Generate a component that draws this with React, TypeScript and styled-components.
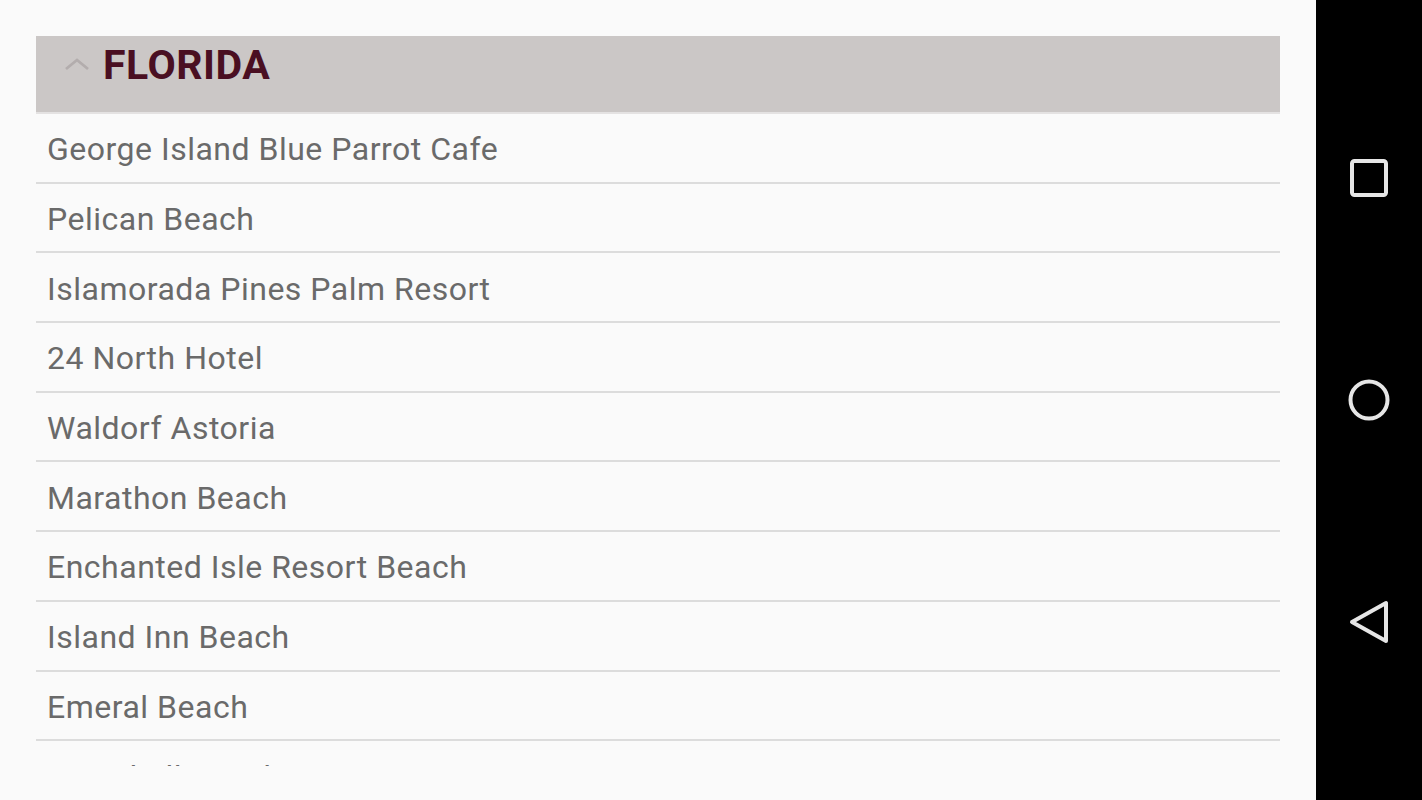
import React from "react";
import styled, { createGlobalStyle } from "styled-components";

const GlobalStyle = createGlobalStyle`
    html, body {
        margin: 0;
        padding: 0;
        background: #fafafa;
        font-family: Roboto, "Noto Sans", sans-serif;
    }
`;

const Screen = styled.div`
    display: flex;
    width: 1422px;
    height: 800px;
    overflow: hidden;
`;

const Content = styled.main`
    flex: 1;
    padding: 36px 36px 0;
    background: #fafafa;
    box-sizing: border-box;
    height: 800px;
`;

const Section = styled.section`
    height: 730px;
    overflow: hidden;
`;

const SectionHeader = styled.header`
    display: flex;
    align-items: center;
    height: 76px;
    padding-left: 28px;
    background: #cbc7c6;
    border-bottom: 2px solid #e4e2e2;
`;

const Chevron = styled.svg`
    width: 26px;
    height: 14px;
    margin-right: 13px;
    margin-top: -20px;
`;

const Title = styled.h2`
    margin: 0;
    font-size: 41px;
    font-weight: 700;
    color: #4a0f22;
    letter-spacing: 0.5px;
    margin-top: -19px;
`;

const List = styled.ul`
    list-style: none;
    margin: 0;
    padding: 0;
`;

const Row = styled.li`
    display: flex;
    align-items: center;
    height: 69.7px;
    padding-left: 11px;
    padding-top: 3px;
    box-sizing: border-box;
    border-bottom: 2px solid #dcdcdc;
    font-size: 32px;
    letter-spacing: 0.5px;
    color: #6a6a6a;
`;

const NavBar = styled.nav`
    width: 106px;
    background: #000;
    display: flex;
    flex-direction: column;
    align-items: center;
    justify-content: space-between;
    padding: 156px 0 156px;
    box-sizing: border-box;
`;

const NavIcon = styled.svg`
    width: 44px;
    height: 44px;
    display: block;
`;

const places = [
    "George Island Blue Parrot Cafe",
    "Pelican Beach",
    "Islamorada Pines Palm Resort",
    "24 North Hotel",
    "Waldorf Astoria",
    "Marathon Beach",
    "Enchanted Isle Resort Beach",
    "Island Inn Beach",
    "Emeral Beach",
    "Sea Shell Beach",
];

const App: React.FC = () => (
    <>
        <GlobalStyle />
        <Screen>
            <Content>
                <Section>
                    <SectionHeader>
                        <Chevron viewBox="0 0 26 14">
                            <polyline points="2,12 13,3 24,12" fill="none" stroke="#b3adad" strokeWidth="2.8" />
                        </Chevron>
                        <Title>FLORIDA</Title>
                    </SectionHeader>
                    <List>
                        {places.map((p) => (
                            <Row key={p}>{p}</Row>
                        ))}
                    </List>
                </Section>
            </Content>
            <NavBar>
                <NavIcon viewBox="0 0 44 44">
                    <rect x="5" y="5" width="34" height="34" rx="2.5" fill="none" stroke="#e6e6e6" strokeWidth="4" />
                </NavIcon>
                <NavIcon viewBox="0 0 44 44">
                    <circle cx="22" cy="22" r="18.5" fill="none" stroke="#e6e6e6" strokeWidth="4" />
                </NavIcon>
                <NavIcon viewBox="0 0 44 44">
                    <polygon points="5,22 39,3 39,41" fill="none" stroke="#e6e6e6" strokeWidth="4" strokeLinejoin="round" />
                </NavIcon>
            </NavBar>
        </Screen>
    </>
);

export default App;
